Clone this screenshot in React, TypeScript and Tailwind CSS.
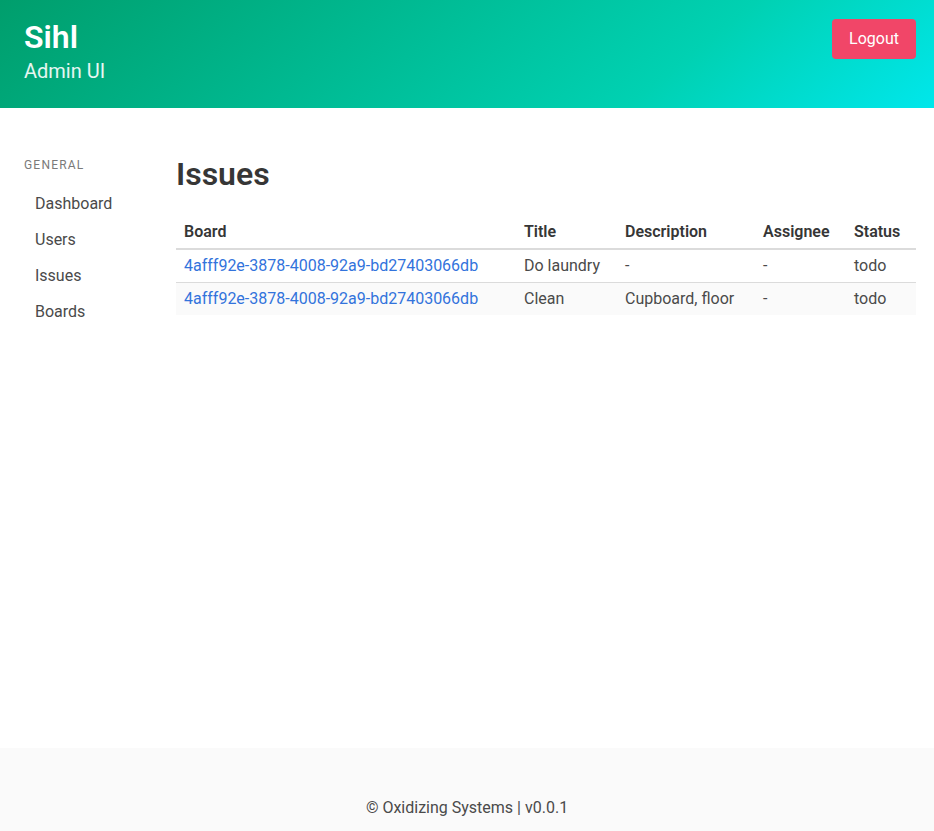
import React from 'react';

const issues = [
  { board: '4afff92e-3878-4008-92a9-bd27403066db', title: 'Do laundry', description: '-', assignee: '-', status: 'todo' },
  { board: '4afff92e-3878-4008-92a9-bd27403066db', title: 'Clean', description: 'Cupboard, floor', assignee: '-', status: 'todo' },
];

const menu = ['Dashboard', 'Users', 'Issues', 'Boards'];

const App: React.FC = () => {
  return (
    <div className="min-h-screen flex flex-col bg-white text-[#4a4a4a] font-['Roboto',sans-serif]">
      {/* Hero header */}
      <header className="bg-[linear-gradient(141deg,#009e6c_0%,#00d1b2_71%,#00e7eb_100%)] pl-6 pr-[18px] pt-[19px] pb-6 flex justify-between items-start">
        <div>
          <h1 className="text-[32px] leading-[36px] font-semibold text-white">Sihl</h1>
          <h2 className="mt-1 text-[20px] leading-[25px] text-white/90">Admin UI</h2>
        </div>
        <button className="h-10 px-[17px] rounded bg-[#f14668] text-white text-base leading-6">Logout</button>
      </header>

      {/* Main */}
      <section className="min-h-[640px] pl-6 pr-[18px] pt-12 flex">
        <aside className="w-[152px] shrink-0">
          <p className="text-xs leading-[18px] uppercase tracking-[0.1em] text-[#7a7a7a] mb-3">General</p>
          <ul>
            {menu.map((item) => (
              <li key={item}>
                <a className="block pl-[11px] py-2 text-base leading-5 text-[#4a4a4a]">{item}</a>
              </li>
            ))}
          </ul>
        </aside>

        <div className="flex-1">
          <h1 className="text-[32px] leading-[36px] font-semibold text-[#363636] mb-6">Issues</h1>
          <table className="w-full text-base leading-6 text-left border-collapse">
            <thead>
              <tr className="border-b-2 border-[#dbdbdb]">
                <th className="w-[340px] px-2 py-1 font-semibold text-[#363636]">Board</th>
                <th className="w-[101px] px-2 py-1 font-semibold text-[#363636]">Title</th>
                <th className="w-[138px] px-2 py-1 font-semibold text-[#363636]">Description</th>
                <th className="w-[91px] px-2 py-1 font-semibold text-[#363636]">Assignee</th>
                <th className="px-2 py-1 font-semibold text-[#363636]">Status</th>
              </tr>
            </thead>
            <tbody>
              {issues.map((issue, i) => (
                <tr key={i} className={i % 2 === 1 ? 'bg-[#fafafa]' : 'border-b border-[#dbdbdb]'}>
                  <td className="px-2 py-1">
                    <a className="text-[#3273dc]">{issue.board}</a>
                  </td>
                  <td className="px-2 py-1">{issue.title}</td>
                  <td className="px-2 py-1">{issue.description}</td>
                  <td className="px-2 py-1">{issue.assignee}</td>
                  <td className="px-2 py-1">{issue.status}</td>
                </tr>
              ))}
            </tbody>
          </table>
        </div>
      </section>

      {/* Footer */}
      <footer className="bg-[#fafafa] pt-12 pb-24 text-center text-base leading-6 text-[#4a4a4a]">
        © Oxidizing Systems | v0.0.1
      </footer>
    </div>
  );
};

export default App;
